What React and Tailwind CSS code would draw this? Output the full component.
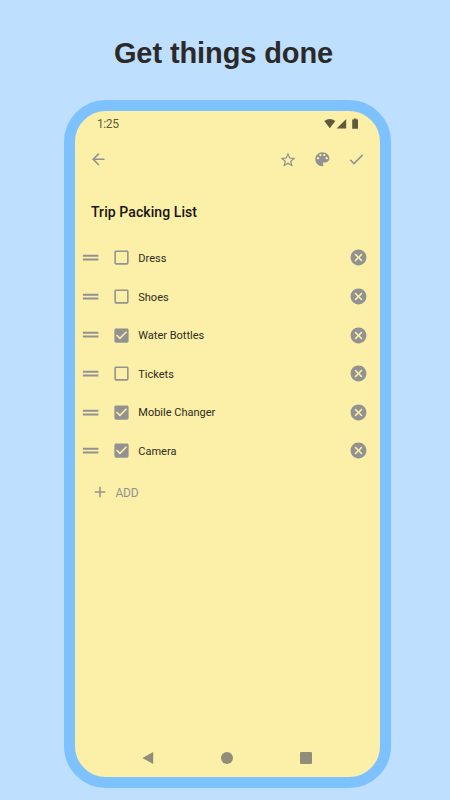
import React, { useState } from 'react';

const ICONS = {
  back: 'M20 11H7.83l5.59-5.59L12 4l-8 8 8 8 1.41-1.41L7.83 13H20v-2z',
  star: 'M22 9.24l-7.19-.62L12 2 9.19 8.63 2 9.24l5.46 4.73L5.82 21 12 17.27 18.18 21l-1.63-7.03L22 9.24zM12 15.4l-3.76 2.27 1-4.28-3.32-2.88 4.38-.38L12 6.1l1.71 4.04 4.38.38-3.32 2.88 1 4.28L12 15.4z',
  palette: 'M12 3c-4.97 0-9 4.03-9 9s4.03 9 9 9c.83 0 1.5-.67 1.5-1.5 0-.39-.15-.74-.39-1.01-.23-.26-.38-.61-.38-.99 0-.83.67-1.5 1.5-1.5H16c2.76 0 5-2.24 5-5 0-4.42-4.03-8-9-8zm-5.5 9c-.83 0-1.5-.67-1.5-1.5S5.67 9 6.5 9 8 9.67 8 10.5 7.33 12 6.5 12zm3-4C8.67 8 8 7.33 8 6.5S8.67 5 9.5 5s1.5.67 1.5 1.5S10.33 8 9.5 8zm5 0c-.83 0-1.5-.67-1.5-1.5S13.67 5 14.5 5s1.5.67 1.5 1.5S15.33 8 14.5 8zm3 4c-.83 0-1.5-.67-1.5-1.5S16.67 9 17.5 9s1.5.67 1.5 1.5-.67 1.5-1.5 1.5z',
  check: 'M9 16.17L4.83 12l-1.42 1.41L9 19 21 7l-1.41-1.41z',
  handle: 'M20 9H4v2h16V9zM4 15h16v-2H4v2z',
  boxOff: 'M19 5v14H5V5h14m0-2H5c-1.1 0-2 .9-2 2v14c0 1.1.9 2 2 2h14c1.1 0 2-.9 2-2V5c0-1.1-.9-2-2-2z',
  boxOn: 'M19 3H5c-1.11 0-2 .9-2 2v14c0 1.1.89 2 2 2h14c1.11 0 2-.9 2-2V5c0-1.1-.89-2-2-2zm-9 14l-5-5 1.41-1.41L10 14.17l7.59-7.59L19 8l-9 9z',
  cancel: 'M12 2C6.47 2 2 6.47 2 12s4.47 10 10 10 10-4.47 10-10S17.53 2 12 2zm5 13.59L15.59 17 12 13.41 8.41 17 7 15.59 10.59 12 7 8.41 8.41 7 12 10.59 15.59 7 17 8.41 13.41 12 17 15.59z',
  add: 'M19 13h-6v6h-2v-6H5v-2h6V5h2v6h6v2z',
};

const Icon = ({ name, className }) => (
  <svg viewBox="0 0 24 24" fill="currentColor" className={className}>
    <path d={ICONS[name]} />
  </svg>
);

const initialItems = [
  { label: 'Dress', done: false },
  { label: 'Shoes', done: false },
  { label: 'Water Bottles', done: true },
  { label: 'Tickets', done: false },
  { label: 'Mobile Changer', done: true },
  { label: 'Camera', done: true },
];

const StatusBar = () => (
  <div className="flex h-[26px] items-center justify-between pl-[22px] pr-[20px] text-[#5f5a3f]">
    <span className="text-[12px] leading-none tracking-[-0.4px]">1:25</span>
    <svg viewBox="0 0 36 12" fill="currentColor" className="h-3 w-9">
      <path d="M.3 3Q5.8-1 11.3 3L5.8 10.2z" />
      <path d="M22.2 1v9.5h-9.6z" />
      <path d="M28.2 1.4h1.6V.4h2.6v1h1.6v9.4h-5.8z" />
    </svg>
  </div>
);

const App = () => {
  const [items, setItems] = useState(initialItems);

  const toggleItem = (index) => {
    setItems(prev => prev.map((item, i) => (i === index ? { ...item, done: !item.done } : item)));
  };

  const removeItem = (index) => {
    setItems(prev => prev.filter((_, i) => i !== index));
  };

  return (
    <div className="flex h-[800px] w-[450px] flex-col items-center overflow-hidden bg-[#bfdfff]">
      <header className="flex h-[100px] shrink-0 items-center pt-[7px] pr-[3px]">
        <h1 className="font-['Liberation_Sans',sans-serif] text-[29px] font-bold leading-none tracking-[-0.1px] text-[#2b2a28]">Get things done</h1>
      </header>

      <main className="ml-[5px] flex h-[688px] w-[327px] shrink-0 flex-col overflow-hidden rounded-[42px] border-[11px] border-[#7ec1ff] bg-[#fcefa8] font-['Roboto',sans-serif] text-[#929292]">
        <StatusBar />

        <div className="flex h-[45px] items-center pl-[14px] pr-[14.2px]">
          <button><Icon name="back" className="size-[18.7px]" /></button>
          <div className="ml-auto flex items-center gap-4">
            <Icon name="star" className="size-[18px]" />
            <Icon name="palette" className="size-[18.7px]" />
            <Icon name="check" className="size-[18.5px]" />
          </div>
        </div>

        <h2 className="h-[56.7px] pl-4 pt-[20px] text-[14px] font-medium leading-5 tracking-[0.08px] text-[#17150f]">Trip Packing List</h2>

        <ul>
          {items.map((item, index) => (
            <li key={item.label} className="flex h-[38.55px] items-center pl-1 pr-[11.7px]">
              <Icon name="handle" className="h-[23.3px] w-[23.3px]" />
              <button onClick={() => toggleItem(index)} className="ml-[9.3px]">
                <Icon name={item.done ? 'boxOn' : 'boxOff'} className="size-[19px]" />
              </button>
              <span className="ml-[7.7px] pt-px text-[11px] leading-none text-[#2e2b20]">{item.label}</span>
              <button onClick={() => removeItem(index)} className="ml-auto">
                <Icon name="cancel" className="size-[19px]" />
              </button>
            </li>
          ))}
        </ul>

        <button className="flex h-[45px] items-center pl-[16px] text-[12px] leading-none tracking-[-0.3px]">
          <Icon name="add" className="mr-[6.6px] size-[18px]" />
          <span className="pt-[1.5px]">ADD</span>
        </button>

        <nav className="mt-auto flex h-[38px] items-center text-[#928d78]">
          <svg viewBox="0 0 12 12" fill="currentColor" className="ml-[67px] size-3">
            <path d="M11.2 0v12L.4 6z" />
          </svg>
          <span className="ml-[67px] size-[11.5px] rounded-full bg-current" />
          <span className="ml-[67px] size-3 rounded-[1px] bg-current" />
        </nav>
      </main>
    </div>
  );
};

export default App;
